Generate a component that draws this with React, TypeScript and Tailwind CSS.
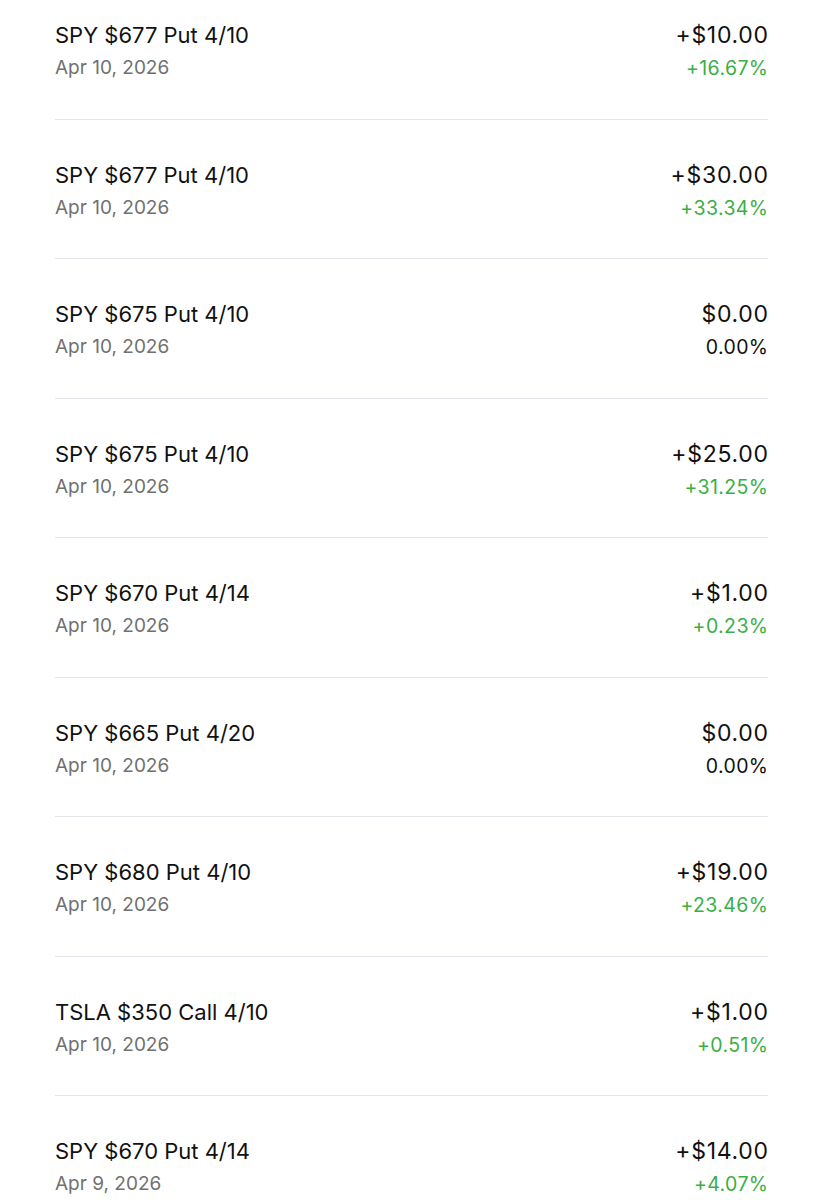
const trades = [
  { name: "SPY $677 Put 4/10", date: "Apr 10, 2026", pl: "+$10.00", pct: "+16.67%" },
  { name: "SPY $677 Put 4/10", date: "Apr 10, 2026", pl: "+$30.00", pct: "+33.34%" },
  { name: "SPY $675 Put 4/10", date: "Apr 10, 2026", pl: "$0.00", pct: "0.00%" },
  { name: "SPY $675 Put 4/10", date: "Apr 10, 2026", pl: "+$25.00", pct: "+31.25%" },
  { name: "SPY $670 Put 4/14", date: "Apr 10, 2026", pl: "+$1.00", pct: "+0.23%" },
  { name: "SPY $665 Put 4/20", date: "Apr 10, 2026", pl: "$0.00", pct: "0.00%" },
  { name: "SPY $680 Put 4/10", date: "Apr 10, 2026", pl: "+$19.00", pct: "+23.46%" },
  { name: "TSLA $350 Call 4/10", date: "Apr 10, 2026", pl: "+$1.00", pct: "+0.51%" },
  { name: "SPY $670 Put 4/14", date: "Apr 9, 2026", pl: "+$14.00", pct: "+4.07%" },
];

export default function App() {
  return (
    <div className="min-h-screen overflow-hidden bg-white font-['Inter',sans-serif] text-[#111]">
      <div className="-mt-[20px] px-[55px]">
        {trades.map((t, i) => (
          <div
            key={i}
            className="flex items-start justify-between border-b border-[#e2e6eb] pt-[41px] pb-[37.5px]"
          >
            <div>
              <p className="text-[22px] leading-[28px]">{t.name}</p>
              <p className="mt-[6px] text-[19px] leading-[26px] text-[#707070]">{t.date}</p>
            </div>
            <div className="text-right">
              <p className="-mr-[0.7px] text-[23px] leading-[28px] tracking-[0.7px]">{t.pl}</p>
              <p
                className={`mt-[6px] -mr-[0.4px] text-[19.5px] leading-[26px] tracking-[0.4px] ${
                  t.pct.startsWith("+") ? "text-[#3aaf45]" : "text-[#111]"
                }`}
              >
                {t.pct}
              </p>
            </div>
          </div>
        ))}
      </div>
    </div>
  );
}
